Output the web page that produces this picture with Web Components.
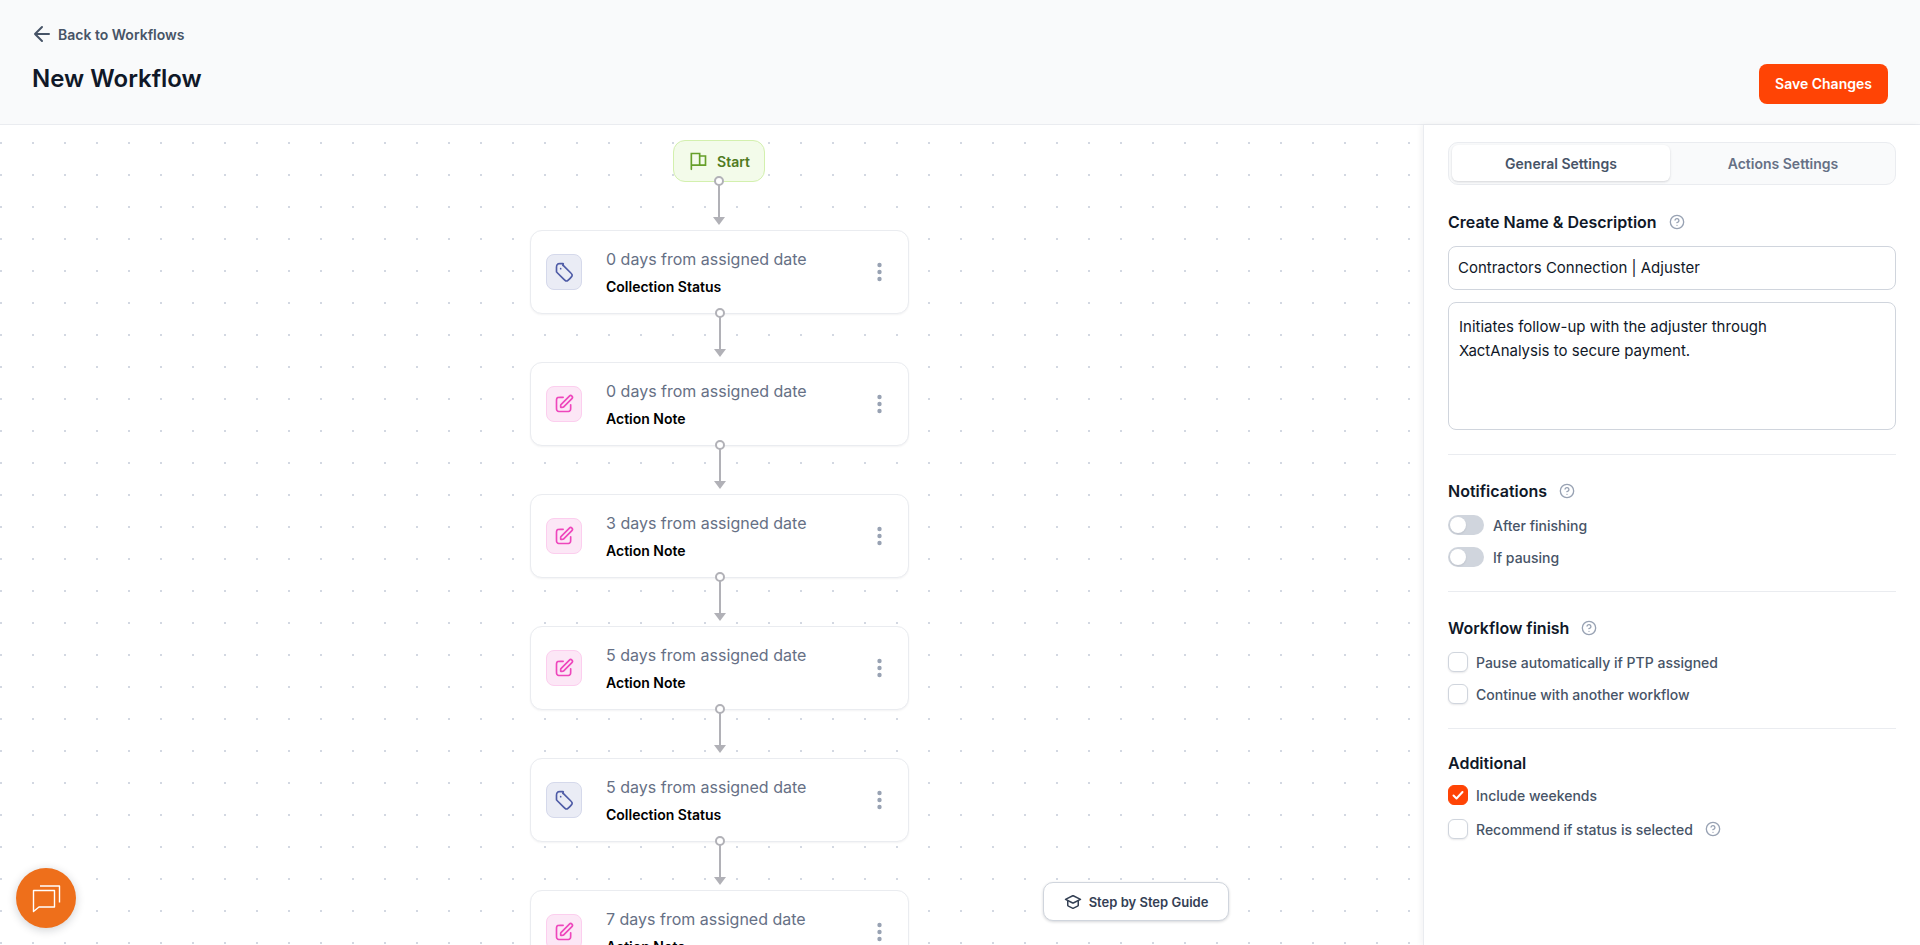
<!DOCTYPE html>
<html lang="en">
<head>
<meta charset="utf-8">
<title>New Workflow</title>
<style>
    html, body { margin: 0; height: 100%; overflow: hidden; }
    body { font-family: Inter, "Liberation Sans", sans-serif; background: #fff; display: flex; flex-direction: column; }
</style>
</head>
<body>
<wf-header title="New Workflow"></wf-header>
<wf-main>
    <wf-canvas slot="canvas">
        <wf-start top="15"></wf-start>
        <wf-node top="105" kind="status" days="0" label="Collection Status"></wf-node>
        <wf-node top="237" kind="note" days="0" label="Action Note"></wf-node>
        <wf-node top="369" kind="note" days="3" label="Action Note"></wf-node>
        <wf-node top="501" kind="note" days="5" label="Action Note"></wf-node>
        <wf-node top="633" kind="status" days="5" label="Collection Status"></wf-node>
        <wf-node top="765" kind="note" days="7" label="Action Note"></wf-node>
        <guide-button>Step by Step Guide</guide-button>
        <chat-fab></chat-fab>
    </wf-canvas>
    <wf-sidebar slot="sidebar">
        <wf-tabs></wf-tabs>
        <wf-section heading="Create Name &amp; Description" help style="padding-top:25px">
            <wf-field>Contractors Connection | Adjuster</wf-field>
            <wf-field multiline>Initiates follow-up with the adjuster through XactAnalysis to secure payment.</wf-field>
        </wf-section>
        <wf-section heading="Notifications" help>
            <wf-toggle>After finishing</wf-toggle>
            <wf-toggle>If pausing</wf-toggle>
        </wf-section>
        <wf-section heading="Workflow finish" help>
            <wf-check>Pause automatically if PTP assigned</wf-check>
            <wf-check>Continue with another workflow</wf-check>
        </wf-section>
        <wf-section heading="Additional" last style="--gap:14px;--top:22px;--head-gap:10px">
            <wf-check checked>Include weekends</wf-check>
            <wf-check help>Recommend if status is selected</wf-check>
        </wf-section>
    </wf-sidebar>
</wf-main>

<script>
const HELP_ICON = `<svg width="16" height="16" viewBox="0 0 24 24" fill="none" stroke="#98a2b3" stroke-width="2" stroke-linecap="round" stroke-linejoin="round" style="display:block;flex:none"><circle cx="12" cy="12" r="10"/><path d="M9.09 9a3 3 0 0 1 5.83 1c0 2-3 3-3 3M12 17h.01"/></svg>`;

const ICONS = {
    status: `<svg width="20" height="20" viewBox="0 0 24 24" fill="none" stroke="#4e5ba6" stroke-width="2" stroke-linecap="round" stroke-linejoin="round"><path d="M8 8h.01M3 6.2v4.475c0 .489 0 .733.055.963.05.204.13.4.24.579.123.201.296.374.642.72l7.669 7.669c1.188 1.188 1.782 1.782 2.467 2.004a3 3 0 0 0 1.854 0c.685-.222 1.28-.816 2.467-2.004l1.212-1.212c1.188-1.188 1.782-1.782 2.004-2.467a3 3 0 0 0 0-1.854c-.222-.685-.816-1.28-2.004-2.467l-7.669-7.669c-.346-.346-.519-.519-.72-.642a2 2 0 0 0-.579-.24C11.409 2 11.165 2 10.676 2H7.2c-1.12 0-1.68 0-2.108.218a2 2 0 0 0-.874.874C3 3.52 3 4.08 3 6.2Z"/></svg>`,
    note: `<svg width="20" height="20" viewBox="0 0 24 24" fill="none" stroke="#ee46bc" stroke-width="2" stroke-linecap="round" stroke-linejoin="round"><path d="M11 4H7.8c-1.68 0-2.52 0-3.162.327a3 3 0 0 0-1.311 1.311C3 6.28 3 7.12 3 8.8v7.4c0 1.68 0 2.52.327 3.162a3 3 0 0 0 1.311 1.311C5.28 21 6.12 21 7.8 21h7.4c1.68 0 2.52 0 3.162-.327a3 3 0 0 0 1.311-1.311C20 18.72 20 17.88 20 16.2V13"/><path d="M8 16h1.675c.489 0 .733 0 .963-.055.204-.05.4-.13.579-.24.201-.123.374-.296.72-.642L21.5 5.5a2.121 2.121 0 0 0-3-3l-9.563 9.563c-.346.346-.519.519-.642.72a2 2 0 0 0-.24.579C8 13.592 8 13.836 8 14.325V16Z"/></svg>`
};

// the edge going out of the bottom of a node, with its handle
const EDGE_STYLE = `
    .handle { position: absolute; left: 50%; bottom: -5px; width: 10px; height: 10px; margin-left: -5px; box-sizing: border-box; background: #fff; border: 2px solid #b1b1b7; border-radius: 50%; z-index: 2; }
    .edge { position: absolute; left: 50%; top: 100%; margin-left: -7px; display: block; }
`;
const edge = (length) => `<span class="handle"></span><svg class="edge" width="14" height="${length}" viewBox="0 0 14 ${length}"><path d="M7 0V${length - 6}" stroke="#b1b1b7" stroke-width="2"/><path d="M1 ${length - 8}h12l-6 8z" fill="#b1b1b7"/></svg>`;

class WfHeader extends HTMLElement {
    constructor() {
        super();
        this.attachShadow({ mode: "open" }).innerHTML = `
        <style>
            :host { display: flex; flex: none; justify-content: space-between; align-items: flex-end; height: 124px; box-sizing: content-box; padding: 0 32px; background: #f9fafb; border-bottom: 1px solid #eaecf0; }
            .left { align-self: flex-start; padding-top: 22px; }
            .back { display: flex; align-items: center; gap: 4px; margin-left: -2px; height: 24px; font-size: 14px; font-weight: 600; color: #475467; }
            h1 { margin: 17px 0 0; font-size: 24px; line-height: 32px; font-weight: 600; color: #101828; }
            button { font: 600 14px/20px Inter, "Liberation Sans", sans-serif; color: #fff; background: #ff4405; border: 0; border-radius: 8px; height: 40px; width: 129px; padding: 0; margin-bottom: 20px; }
        </style>
        <div class="left">
            <div class="back">
                <svg width="24" height="24" viewBox="0 0 24 24" fill="none" stroke="#475467" stroke-width="2" stroke-linecap="round" stroke-linejoin="round"><path d="M19 12H5m0 0 7 7m-7-7 7-7"/></svg>
                Back to Workflows
            </div>
            <h1></h1>
        </div>
        <button>Save Changes</button>`;
        this.shadowRoot.querySelector("h1").textContent = this.getAttribute("title");
    }
}

class WfMain extends HTMLElement {
    constructor() {
        super();
        this.attachShadow({ mode: "open" }).innerHTML = `
        <style>
            :host { display: flex; flex: 1; min-height: 0; }
        </style>
        <slot name="canvas"></slot><slot name="sidebar"></slot>`;
    }
}

class WfCanvas extends HTMLElement {
    constructor() {
        super();
        this.attachShadow({ mode: "open" }).innerHTML = `
        <style>
            :host { display: block; position: relative; flex: 1; min-width: 0; overflow: hidden;
                background-color: #fff;
                background-image: radial-gradient(circle at 1px 1px, #d3d8e2 1px, transparent 1.2px);
                background-size: 32px 32px; background-position: 0 17px; }
        </style>
        <slot></slot>`;
    }
}

class WfStart extends HTMLElement {
    constructor() {
        super();
        this.attachShadow({ mode: "open" }).innerHTML = `
        <style>
            :host { position: absolute; left: 673px; width: 92px; height: 42px; box-sizing: border-box; display: flex; align-items: center; justify-content: center; gap: 9px; background: #f3fbea; border: 1px solid #d3f0ae; border-radius: 12px; font-size: 14px; font-weight: 600; color: #4f7a21; }
            ${EDGE_STYLE}
        </style>
        <svg width="20" height="20" viewBox="0 0 24 24" fill="none" stroke="#669f2a" stroke-width="2" stroke-linecap="round" stroke-linejoin="square"><path d="M4 22V3h10v14H4"/><path d="M14 6h7v11h-7"/></svg>
        <span>Start</span>
        ${edge(44)}`;
        this.style.top = this.getAttribute("top") + "px";
    }
}

class WfNode extends HTMLElement {
    constructor() {
        super();
        const kind = this.getAttribute("kind");
        this.attachShadow({ mode: "open" }).innerHTML = `
        <style>
            :host { position: absolute; left: 530px; width: 379px; height: 84px; box-sizing: border-box; display: flex; align-items: center; padding: 0 16px 0 15px; background: #fff; border: 1px solid #eaecf0; border-radius: 12px; box-shadow: 0 1px 2px rgba(16,24,40,.05); }
            .icon { flex: none; width: 36px; height: 36px; box-sizing: border-box; display: flex; align-items: center; justify-content: center; border-radius: 8px; border: 1px solid; }
            .status { background: #eaecf5; border-color: #d5d9eb; }
            .note { background: #fce7f6; border-color: #fcceee; }
            .text { flex: 1; margin-left: 24px; }
            .days { font-size: 16px; line-height: 24px; color: #667085; }
            .label { margin-top: 6px; font-size: 14px; line-height: 20px; font-weight: 600; color: #000; }
            .menu { display: block; margin-right: 10px; }
            ${EDGE_STYLE}
        </style>
        <div class="icon ${kind}">${ICONS[kind]}</div>
        <div class="text">
            <div class="days">${this.getAttribute("days")} days from assigned date</div>
            <div class="label">${this.getAttribute("label")}</div>
        </div>
        <svg class="menu" width="5" height="20" viewBox="0 0 5 20" fill="#98a2b3"><circle cx="2.5" cy="3" r="2.2"/><circle cx="2.5" cy="10" r="2.2"/><circle cx="2.5" cy="17" r="2.2"/></svg>
        ${edge(44)}`;
        this.style.top = this.getAttribute("top") + "px";
    }
}

class GuideButton extends HTMLElement {
    constructor() {
        super();
        this.attachShadow({ mode: "open" }).innerHTML = `
        <style>
            :host { position: absolute; left: 1043px; top: 757px; width: 186px; height: 39px; box-sizing: border-box; display: flex; align-items: center; justify-content: center; gap: 7px; background: #fff; border: 1px solid #d0d5dd; border-radius: 10px; box-shadow: 0 1px 3px rgba(16,24,40,.18); font-size: 13px; font-weight: 600; color: #344054; }
        </style>
        <svg width="18" height="18" viewBox="0 0 24 24" fill="none" stroke="#344054" stroke-width="2" stroke-linecap="round" stroke-linejoin="round"><path d="M5 10v6.011c0 .36 0 .539.055.697a1 1 0 0 0 .23.374c.118.12.278.2.6.36l5.4 2.7c.262.131.393.197.53.223a1 1 0 0 0 .37 0c.137-.026.268-.092.53-.223l5.4-2.7c.322-.16.482-.24.6-.36a1 1 0 0 0 .23-.374c.055-.158.055-.338.055-.697V10"/><path d="M2 8.5l9.642-4.821c.131-.066.197-.098.266-.111a.5.5 0 0 1 .184 0c.069.013.135.045.266.111L22 8.5l-9.642 4.821c-.131.066-.197.098-.266.111a.5.5 0 0 1-.184 0c-.069-.013-.135-.045-.266-.111L2 8.5Z"/></svg>
        <slot></slot>`;
    }
}

class ChatFab extends HTMLElement {
    constructor() {
        super();
        this.attachShadow({ mode: "open" }).innerHTML = `
        <style>
            :host { position: absolute; left: 16px; top: 743px; width: 60px; height: 60px; display: flex; align-items: center; justify-content: center; border-radius: 50%; background: #ee6f1b; box-shadow: 0 2px 10px rgba(16,24,40,.2); }
        </style>
        <svg width="30" height="30" viewBox="0 0 30 30" fill="none" stroke="#fff" stroke-width="1.4" stroke-linejoin="round"><path d="M2.5 7.5h21v16.5H8L2.5 28.5z"/><path d="M9 3h19.5v16.5"/></svg>`;
    }
}

class WfSidebar extends HTMLElement {
    constructor() {
        super();
        this.attachShadow({ mode: "open" }).innerHTML = `
        <style>
            :host { display: block; flex: none; width: 497px; box-sizing: border-box; padding: 17px 24px 0; background: #fff; border-left: 1px solid #eaecf0; box-shadow: -2px 0 6px rgba(16,24,40,.05); position: relative; }
        </style>
        <slot></slot>`;
    }
}

class WfTabs extends HTMLElement {
    constructor() {
        super();
        this.attachShadow({ mode: "open" }).innerHTML = `
        <style>
            :host { display: flex; gap: 4px; height: 43px; box-sizing: border-box; padding: 2px 3px 3px; background: #f9fafb; border: 1px solid #eaecf0; border-radius: 10px; }
            div { flex: 1; display: flex; align-items: center; justify-content: center; font-size: 14px; font-weight: 600; color: #667085; border-radius: 6px; }
            .on { background: #fff; color: #475467; box-shadow: 0 1px 3px rgba(16,24,40,.1), 0 1px 2px rgba(16,24,40,.06); }
        </style>
        <div class="on">General Settings</div>
        <div>Actions Settings</div>`;
    }
}

class WfSection extends HTMLElement {
    constructor() {
        super();
        const help = this.hasAttribute("help") ? HELP_ICON : "";
        this.attachShadow({ mode: "open" }).innerHTML = `
        <style>
            :host { display: block; padding: var(--top, 24px) 0 24px; border-bottom: 1px solid #eaecf0; }
            :host([last]) { border-bottom: 0; }
            h2 { display: flex; align-items: center; gap: 12px; margin: 0 0 var(--head-gap, 12px); font-size: 16px; line-height: 24px; font-weight: 600; color: #101828; }
            .body { display: flex; flex-direction: column; gap: var(--gap, 12px); }
        </style>
        <h2><span></span>${help}</h2>
        <div class="body"><slot></slot></div>`;
        this.shadowRoot.querySelector("h2 span").textContent = this.getAttribute("heading");
    }
}

class WfField extends HTMLElement {
    constructor() {
        super();
        this.attachShadow({ mode: "open" }).innerHTML = `
        <style>
            :host { display: flex; align-items: center; height: 44px; box-sizing: border-box; padding: 0 12px 0 9px; background: #fff; border: 1px solid #d0d5dd; border-radius: 8px; font-size: 15px; line-height: 24px; color: #101828; }
            :host([multiline]) { display: block; height: 128px; padding: 12px 60px 0 10px; }
        </style>
        <slot></slot>`;
    }
}

class WfToggle extends HTMLElement {
    constructor() {
        super();
        this.attachShadow({ mode: "open" }).innerHTML = `
        <style>
            :host { display: flex; align-items: center; gap: 9px; height: 20px; font-size: 14px; font-weight: 500; color: #475467; }
            .track { flex: none; width: 36px; height: 20px; box-sizing: border-box; padding: 2px; background: #d0d5dd; border-radius: 10px; }
            .knob { width: 16px; height: 16px; background: #fff; border-radius: 50%; box-shadow: 0 1px 2px rgba(16,24,40,.1); }
        </style>
        <span class="track"><div class="knob"></div></span>
        <slot></slot>`;
    }
}

class WfCheck extends HTMLElement {
    constructor() {
        super();
        const help = this.hasAttribute("help") ? HELP_ICON : "";
        this.attachShadow({ mode: "open" }).innerHTML = `
        <style>
            :host { display: flex; align-items: center; gap: 8px; height: 20px; font-size: 14px; font-weight: 500; color: #475467; }
            .box { flex: none; width: 20px; height: 20px; box-sizing: border-box; display: flex; align-items: center; justify-content: center; background: #fff; border: 1px solid #d0d5dd; border-radius: 6px; box-shadow: 0 1px 2px rgba(16,24,40,.1); }
            :host([checked]) .box { background: #ff4405; border-color: #ff4405; box-shadow: none; }
            svg.tick { display: none; }
            :host([checked]) svg.tick { display: block; }
            .help { margin-left: 4px; }
        </style>
        <span class="box"><svg class="tick" width="14" height="14" viewBox="0 0 14 14" fill="none" stroke="#fff" stroke-width="2" stroke-linecap="round" stroke-linejoin="round"><path d="M2.5 7.5l3 3 6-6.5"/></svg></span>
        <slot></slot>
        <span class="help">${help}</span>`;
    }
}

customElements.define("wf-header", WfHeader);
customElements.define("wf-main", WfMain);
customElements.define("wf-canvas", WfCanvas);
customElements.define("wf-start", WfStart);
customElements.define("wf-node", WfNode);
customElements.define("guide-button", GuideButton);
customElements.define("chat-fab", ChatFab);
customElements.define("wf-sidebar", WfSidebar);
customElements.define("wf-tabs", WfTabs);
customElements.define("wf-section", WfSection);
customElements.define("wf-field", WfField);
customElements.define("wf-toggle", WfToggle);
customElements.define("wf-check", WfCheck);
</script>
</body>
</html>
